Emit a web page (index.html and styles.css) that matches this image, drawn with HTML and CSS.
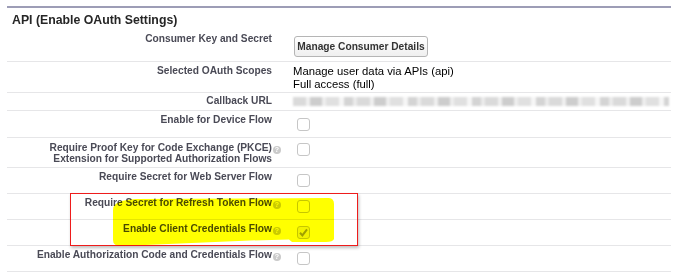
FILE: index.html
```html
<!DOCTYPE html>
<html lang="en">
<head>
    <meta charset="UTF-8">
    <meta name="viewport" content="width=device-width, initial-scale=1.0">
    <title>API (Enable OAuth Settings)</title>
    <link rel="stylesheet" href="styles.css">
</head>
<body>
    <div class="page">
        <div class="section">
            <h3 class="section-title">API (Enable OAuth Settings)</h3>

            <div class="detail-list">
                <div class="row">
                    <div class="label">Consumer Key and Secret</div>
                    <div class="data data-button"><button class="btn">Manage Consumer Details</button></div>
                </div>
                <div class="row">
                    <div class="label">Selected OAuth Scopes</div>
                    <div class="data data-text">Manage user data via APIs (api)<br>Full access (full)</div>
                </div>
                <div class="row">
                    <div class="label label-tight">Callback URL</div>
                    <div class="data data-url"><div class="blurred"></div></div>
                </div>
                <div class="row">
                    <div class="label">Enable for Device Flow</div>
                    <div class="data data-check data-first"><span class="checkbox"></span></div>
                </div>
                <div class="row">
                    <div class="label label-double">Require Proof Key for Code Exchange (PKCE)<span class="help">?</span><br>Extension for Supported Authorization Flows</div>
                    <div class="data data-check data-high"><span class="checkbox"></span></div>
                </div>
                <div class="row">
                    <div class="label">Require Secret for Web Server Flow</div>
                    <div class="data data-check"><span class="checkbox"></span></div>
                </div>
                <div class="row">
                    <div class="label">Require Secret for Refresh Token Flow<span class="help">?</span></div>
                    <div class="data data-check"><span class="checkbox"></span></div>
                </div>
                <div class="row">
                    <div class="label">Enable Client Credentials Flow<span class="help">?</span></div>
                    <div class="data data-check">
                        <span class="checkbox checked">
                            <svg viewBox="0 0 13 13" width="13" height="13"><path d="M3 6.8 L5.4 9.4 L10 3.4" fill="none" stroke="#a0a0a0" stroke-width="2"/></svg>
                        </span>
                    </div>
                </div>
                <div class="row">
                    <div class="label">Enable Authorization Code and Credentials Flow<span class="help">?</span></div>
                    <div class="data data-check"><span class="checkbox"></span></div>
                </div>
            </div>
        </div>

        <!-- screenshot annotations -->
        <div class="callout-box"></div>
        <svg class="highlight" viewBox="0 0 692 274" width="692" height="274">
            <path d="M113,210 C113,203 120,200 136,199 L240,198.5 L329,198 Q334,198.5 334,204 L334,239 Q333,242 326,242 L292,242 L289,239.5 L250,240.5 L122,246 Q113,246.5 113,240 Z" fill="#ffff00"/>
        </svg>
    </div>
</body>
</html>
```

FILE: styles.css
```css
:root {
    --label-color: #4a4a56;
    --line-color: #e6e6e8;
    --header-line: #9d9db6;
}

body {
    margin: 0;
    background-color: #ffffff;
    font-family: "Liberation Sans", Arial, sans-serif;
    color: #000000;
}

.page {
    position: relative;
    width: 692px;
    height: 274px;
    overflow: hidden;
}

.section {
    margin: 6px 21px 0 7px;
    border-top: 2px solid var(--header-line);
}

.section-title {
    margin: 0;
    height: 22px;
    padding: 4px 5px 0;
    box-sizing: border-box;
    font-size: 12.3px;
    font-weight: bold;
    line-height: 16px;
    color: #262626;
}

.row {
    display: grid;
    grid-template-columns: 276px 1fr;
    border-bottom: 1px solid var(--line-color);
}

.label {
    padding: 3px 11px 3px 0;
    text-align: right;
    font-size: 10.2px;
    font-weight: bold;
    line-height: 12px;
    color: var(--label-color);
    white-space: nowrap;
}

.label-tight {
    padding-top: 2px;
}

.label-double {
    padding-top: 5px;
    line-height: 10px;
}

.help {
    display: inline-block;
    width: 8px;
    height: 8px;
    margin: 0 -9px 0 1px;
    border-radius: 50%;
    background-color: #cacaca;
    color: #ffffff;
    font-size: 7px;
    font-weight: bold;
    line-height: 8px;
    text-align: center;
    vertical-align: -1px;
}

.data {
    padding: 6px 10px 6px;
}

.data-button {
    padding: 6px 10px 4px 11px;
}

.data-text {
    padding: 3px 10px 1px;
    font-size: 11.3px;
    line-height: 13px;
}

.data-url {
    padding: 4px 2px 4px 10px;
}

.data-first {
    padding-top: 7px;
}

.data-high {
    padding-top: 5px;
}

.btn {
    display: block;
    width: 134px;
    height: 21px;
    padding: 0;
    border: 1px solid #b5b5b5;
    border-radius: 3px;
    background: linear-gradient(#ffffff, #efefef);
    font-family: "Liberation Sans", Arial, sans-serif;
    font-size: 10.2px;
    font-weight: bold;
    color: #333333;
}

.blurred {
    height: 9px;
    background: repeating-linear-gradient(90deg,
        #dadada 0 13px, #f0f0f0 13px 17px,
        #cdcdcd 17px 29px, #eeeeee 29px 33px,
        #e0e0e0 33px 46px, #f6f6f6 46px 51px,
        #d4d4d4 51px 60px, #ebebeb 60px 64px);
    filter: blur(1.2px);
}

.checkbox {
    display: block;
    width: 13px;
    height: 13px;
    margin-left: 4px;
    box-sizing: border-box;
    border: 1px solid #c6c6c6;
    border-radius: 3px;
    background-color: #ffffff;
}

.checkbox svg {
    display: block;
    margin: -1px;
}

.checkbox.checked {
    background-color: #f2f2f2;
}

.callout-box {
    position: absolute;
    left: 70px;
    top: 193px;
    width: 288px;
    height: 53px;
    border: 1px solid #ee1c1c;
    box-sizing: border-box;
    box-shadow: 1px 2px 3px rgba(0, 0, 0, 0.25);
}

.highlight {
    position: absolute;
    left: 0;
    top: 0;
    mix-blend-mode: multiply;
    pointer-events: none;
}
```
